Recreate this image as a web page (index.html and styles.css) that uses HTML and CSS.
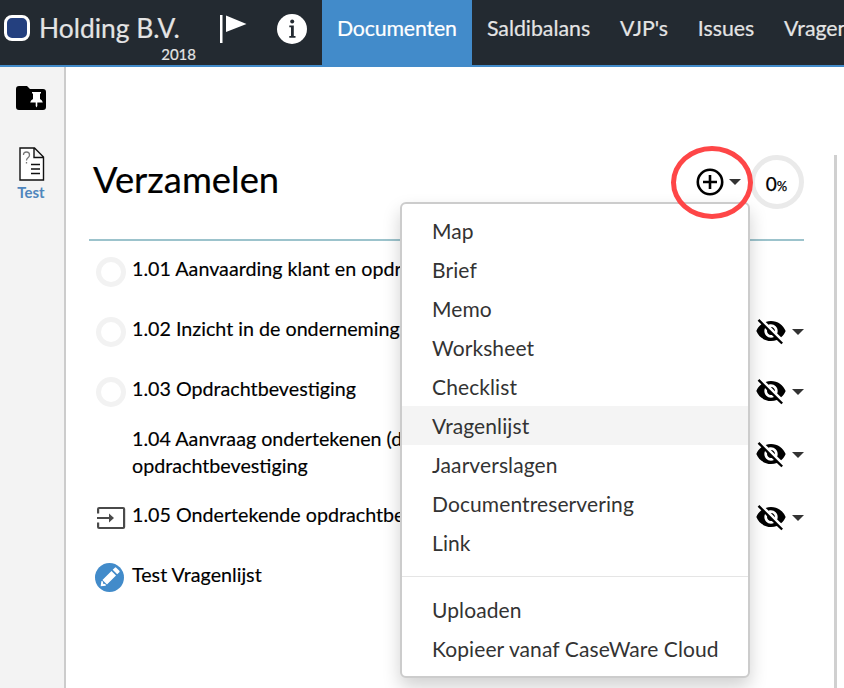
FILE: index.html
```
<!DOCTYPE html>
<html lang="nl">
<head>
<meta charset="utf-8">
<title>Documenten</title>
<link rel="stylesheet" href="styles.css">
</head>
<body>
<svg class="defs" width="0" height="0">
  <symbol id="eye-off" viewBox="0 0 24 24"><path d="M12 7c2.760 0 5 2.240 5 5 0 .650-.130 1.260-.360 1.830l2.920 2.920c1.510-1.260 2.700-2.890 3.430-4.750-1.730-4.390-6-7.500-11-7.500-1.400 0-2.740.250-3.980.700l2.160 2.160C10.740 7.130 11.350 7 12 7zM2 4.270l2.280 2.280.460.460C3.080 8.300 1.780 10.020 1 12c1.730 4.390 6 7.500 11 7.500 1.550 0 3.030-.300 4.380-.840l.420.420L19.730 22 21 20.730 3.270 3 2 4.270zM7.530 9.800l1.550 1.550c-.050.210-.080.430-.080.650 0 1.660 1.340 3 3 3 .220 0 .440-.030.650-.080l1.550 1.550c-.670.330-1.410.530-2.200.530-2.760 0-5-2.240-5-5 0-.790.200-1.530.530-2.200zm4.310-.780 3.150 3.150.020-.160c0-1.660-1.340-3-3-3l-.170.010z"/></symbol>
</svg>
<header class="topbar">
  <div class="client">
    <span class="logo"></span>
    <div class="client-name">Holding B.V.<span class="year">2018</span></div>
    <svg class="flag" width="28" height="30" viewBox="0 0 28 30"><path fill="#fff" d="M1 1h2.500v28H1zM7 1.500 27.500 10 7 18z"/></svg>
    <svg class="info" width="30" height="30" viewBox="0 0 30 30"><circle cx="15" cy="15" r="15" fill="#fff"/><path fill="#232a31" d="M12.300 11.500h4.500v10.500h1.700v1.800h-6.200V22H14v-8.700h-1.700z"/><circle cx="15.200" cy="7.600" r="2" fill="#232a31"/></svg>
  </div>
  <nav class="tabs">
    <a class="tab active">Documenten</a><a class="tab">Saldibalans</a><a class="tab">VJP's</a><a class="tab">Issues</a><a class="tab">Vragen</a>
  </nav>
</header>
<div class="body">
  <aside class="sidebar">
    <svg class="folder" width="30" height="24" viewBox="0 0 30 24"><path d="M3 0h8l3 3h13q3 0 3 3v15q0 3-3 3H3q-3 0-3-3V3q0-3 3-3z"/><path fill="#fff" d="M16 6h9v1.500h-1V13q2.500 1.200 2.800 3.500h-5.500V20l-.8 1.500-.8-1.500v-3.500h-5.500q.3-2.300 2.800-3.500V7.500h-1z"/></svg>
    <svg class="doc" width="26" height="34" viewBox="0 0 26 34"><path fill="#fff" stroke="#111" stroke-width="1.400" d="M1 1h14.500L24.500 10v23H1zM15 1v9.500h9.500"/><path fill="none" stroke="#111" stroke-width="1.500" d="M12 17.500h9M12 22h9M12 26.500h9"/><path fill="none" stroke="#777" stroke-width="1.300" d="M4.500 8q0-3 3-3t3 3q0 1.500-1.500 2.700T7.500 13.500M7.500 15v1.500"/></svg>
    <span class="side-label">Test</span>
  </aside>
  <main class="content">
    <div class="heading">
      <h1>Verzamelen</h1>
      <div class="add">
        <svg width="28" height="28" viewBox="0 0 28 28"><g fill="none" stroke="#000" stroke-width="2.600"><circle cx="14" cy="14" r="12.200"/><path d="M14 7v14M7 14h14"/></g></svg>
        <span class="caret"></span>
        <span class="marker"></span>
      </div>
      <div class="progress">0<small>%</small></div>
    </div>
    <ul class="docs">
      <li class="row"><span class="status"><i class="ring"></i></span><span class="name">1.01 Aanvaarding klant en opdr</span></li>
      <li class="row"><span class="status"><i class="ring"></i></span><span class="name">1.02 Inzicht in de onderneming</span><span class="vis"><svg width="32" height="32"><use href="#eye-off"/></svg><i class="caret"></i></span></li>
      <li class="row short"><span class="status"><i class="ring"></i></span><span class="name">1.03 Opdrachtbevestiging</span><span class="vis"><svg width="32" height="32"><use href="#eye-off"/></svg><i class="caret"></i></span></li>
      <li class="row double"><span class="status"></span><span class="name">1.04 Aanvraag ondertekenen (d<br>opdrachtbevestiging</span><span class="vis"><svg width="32" height="32"><use href="#eye-off"/></svg><i class="caret"></i></span></li>
      <li class="row"><span class="status"><svg width="30" height="24" viewBox="0 0 30 24"><path fill="none" stroke="#4a4a4a" stroke-width="2.200" d="M2.100 7.500V3q0-1 1-1h24q1 0 1 1v18q0 1-1 1h-24q-1 0-1-1v-4.500M1 12h14"/><path fill="#4a4a4a" d="m13 7.500 5 4.500-5 4.500z"/></svg></span><span class="name">1.05 Ondertekende opdrachtbe</span><span class="vis"><svg width="32" height="32"><use href="#eye-off"/></svg><i class="caret"></i></span></li>
      <li class="row"><span class="status edit"><svg width="29" height="29" viewBox="0 0 29 29"><circle cx="14.500" cy="14.500" r="14.500" fill="#428bca"/><g fill="#fff" transform="translate(14.500 14.500) rotate(45)"><path d="M-3.200-6h6.400V6.800h-6.400zM-3.200-10.700q0-1 1-1h4.400q1 0 1 1v3h-6.400zM-3.200 8.300 0 12.500l3.200-4.200-1.500-.8L0 9l-1.700-1.500z"/></g></svg></span><span class="name">Test Vragenlijst</span></li>
    </ul>
    <div class="menu">
      <a>Map</a><a>Brief</a><a>Memo</a><a>Worksheet</a><a>Checklist</a><a class="hover">Vragenlijst</a><a>Jaarverslagen</a><a>Documentreservering</a><a>Link</a>
      <hr>
      <a>Uploaden</a><a>Kopieer vanaf CaseWare Cloud</a>
    </div>
  </main>
  <div class="scrollbar"></div>
</div>
</body>
</html>
```

FILE: styles.css
```
* { box-sizing: border-box; }
body { margin: 0; height: 688px; overflow: hidden; display: flex; flex-direction: column; background: #fff; color: #000; font-family: Lato, sans-serif; }
.defs { position: absolute; }
.topbar { height: 67px; flex: none; display: flex; background: #232a31; border-bottom: 2px solid #428bca; color: #e4e4e4; }
.client { width: 322px; flex: none; display: flex; align-items: flex-start; }
.logo { width: 26px; height: 26px; margin: 15px 0 0 4px; flex: none; border: 3px solid #fff; border-radius: 8px; background: #24407f; }
.client-name { position: relative; width: 157px; margin-left: 9px; font-size: 26.4px; line-height: 34px; padding-top: 11px; white-space: nowrap; -webkit-text-stroke: .2px; }
.year { display: block; font-size: 15px; line-height: 18px; text-align: right; }
.flag { margin: 14px 0 0 23px; flex: none; }
.info { margin: 14px 0 0 30px; flex: none; }
.tabs { display: flex; overflow: hidden; flex: 1; }
.tab { flex: none; padding: 0 14.900px; font-size: 21.300px; line-height: 56px; -webkit-text-stroke: .2px; }
.tab.active { width: 150px; background: #428bca; color: #fff; letter-spacing: -.15px; }
.body { flex: 1; display: flex; min-height: 0; }
.sidebar { width: 66px; flex: none; background: #f3f3f3; border-right: 2px solid #ccc; display: flex; flex-direction: column; align-items: center; padding-right: 2px; }
.folder { margin-top: 19px; }
.doc { margin: 37px 0 0 1px; }
.side-label { margin-top: 1px; font-size: 15px; line-height: 20px; font-weight: 700; color: #4f86bd; }
.content { position: relative; width: 738px; flex: none; padding: 88px 0 0 23px; }
.heading { height: 86px; display: flex; border-bottom: 2px solid #9cc3cc; }
h1 { margin: -1px 0 0 4px; flex: 1; font-size: 36.400px; line-height: 51px; font-weight: 400; -webkit-text-stroke: .2px; }
.add { position: relative; z-index: 3; display: flex; align-items: center; height: 54px; width: 47px; margin-right: 7px; }
.add .caret { margin-left: 5px; }
.caret { flex: none; width: 0; height: 0; border: 6px solid transparent; border-top-color: #333; border-bottom: 0; }
.marker { position: absolute; left: -25px; top: -9px; width: 82px; height: 73px; border: 5px solid #fe4647; border-radius: 50%; }
.progress { width: 54px; height: 54px; border: 5px solid #eaeaea; border-radius: 50%; padding-right: 1px; text-align: center; font-size: 19px; line-height: 48px; -webkit-text-stroke: .25px; }
.progress small { font-size: 13px; }
.docs { list-style: none; margin: 15px 0 0; padding: 0; }
.row { display: flex; height: 60px; font-size: 19.700px; line-height: 27px; }
.row.short { height: 50px; }
.row.double { height: 76px; }
.status { width: 43px; flex: none; padding: 1px 0 0 7px; }
.status svg { display: block; margin-top: 3px; }
.status.edit { padding: 0 0 0 6px; }
.status.edit svg { margin-top: 1px; }
.ring { display: block; width: 30px; height: 30px; border: 5px solid #f2f2f2; border-radius: 50%; }
.name { flex: 1; margin-top: -1px; white-space: nowrap; -webkit-text-stroke: .15px; }
.vis { flex: none; height: 30px; display: flex; align-items: center; }
.double .vis { height: 56px; }
.vis .caret { margin: 1px 0 0 5px; }
.menu { position: absolute; z-index: 2; left: 334px; top: 135px; width: 350px; height: 476px; padding: 7px 0; background: #fff; border: 2px solid #ccc; border-radius: 6px; box-shadow: 0 9px 18px rgba(0,0,0,.18); color: #333; }
.menu a { display: block; padding-left: 30px; height: 39px; font-size: 21px; line-height: 39px; letter-spacing: .1px; }
.menu .hover { background: #f4f4f4; }
.menu hr { height: 1px; margin: 14px 0 13px; border: 0; background: #e5e5e5; }
.scrollbar { margin: 88px 0 0 30px; width: 3px; background: #d0d0d0; }
```
